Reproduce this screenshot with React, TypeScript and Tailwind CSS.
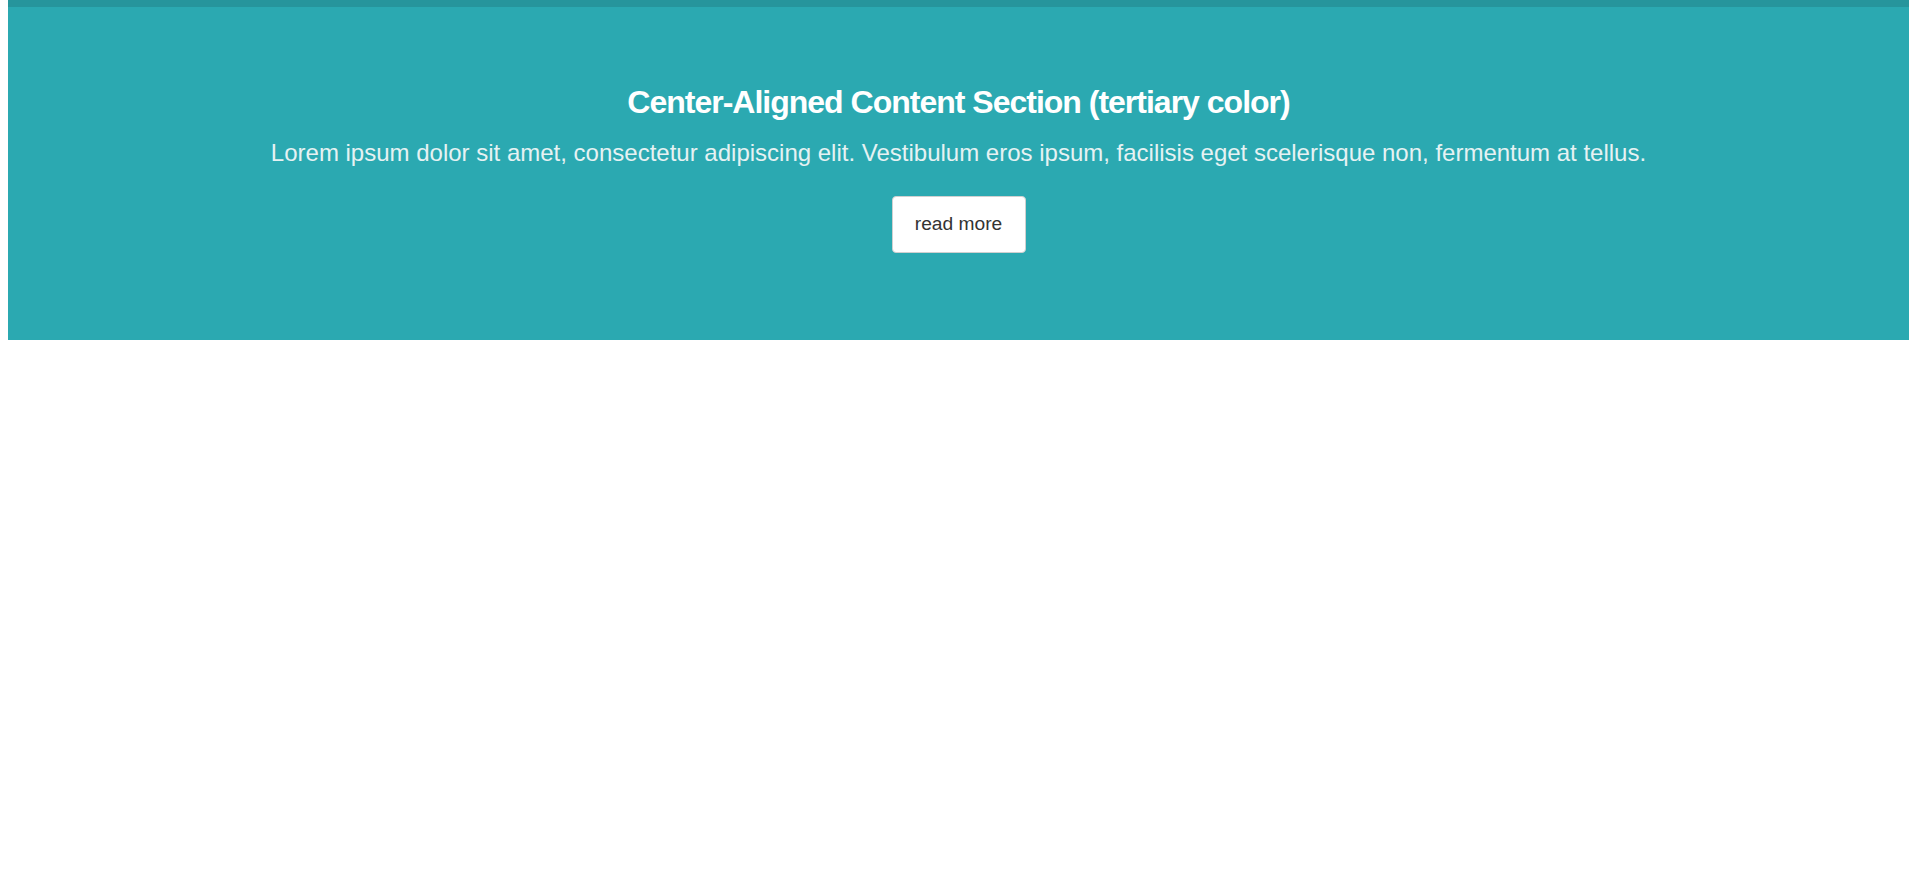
export default function App() {
  return (
    <div className="min-h-[871px] bg-white" style={{ fontFamily: '"Liberation Sans", Arial, sans-serif' }}>
      <section className="ml-[8px] w-[1901px] h-[340px] bg-[#2ba9b1] border-t-[7px] border-[#26959c] flex flex-col items-center pt-[75px]">
        <h2 className="text-white font-bold text-[32px] leading-[40px] tracking-[-1px]">
          Center-Aligned Content Section (tertiary color)
        </h2>
        <p className="mt-[16px] text-[#e6f2f3] text-[24px] leading-[30px]">
          Lorem ipsum dolor sit amet, consectetur adipiscing elit. Vestibulum eros ipsum, facilisis eget scelerisque non, fermentum at tellus.
        </p>
        <button className="mt-[28px] w-[134px] h-[57px] bg-white rounded-[4px] border border-[#d0d0d0] text-[#333] text-[19.2px]">
          read more
        </button>
      </section>
    </div>
  );
}
